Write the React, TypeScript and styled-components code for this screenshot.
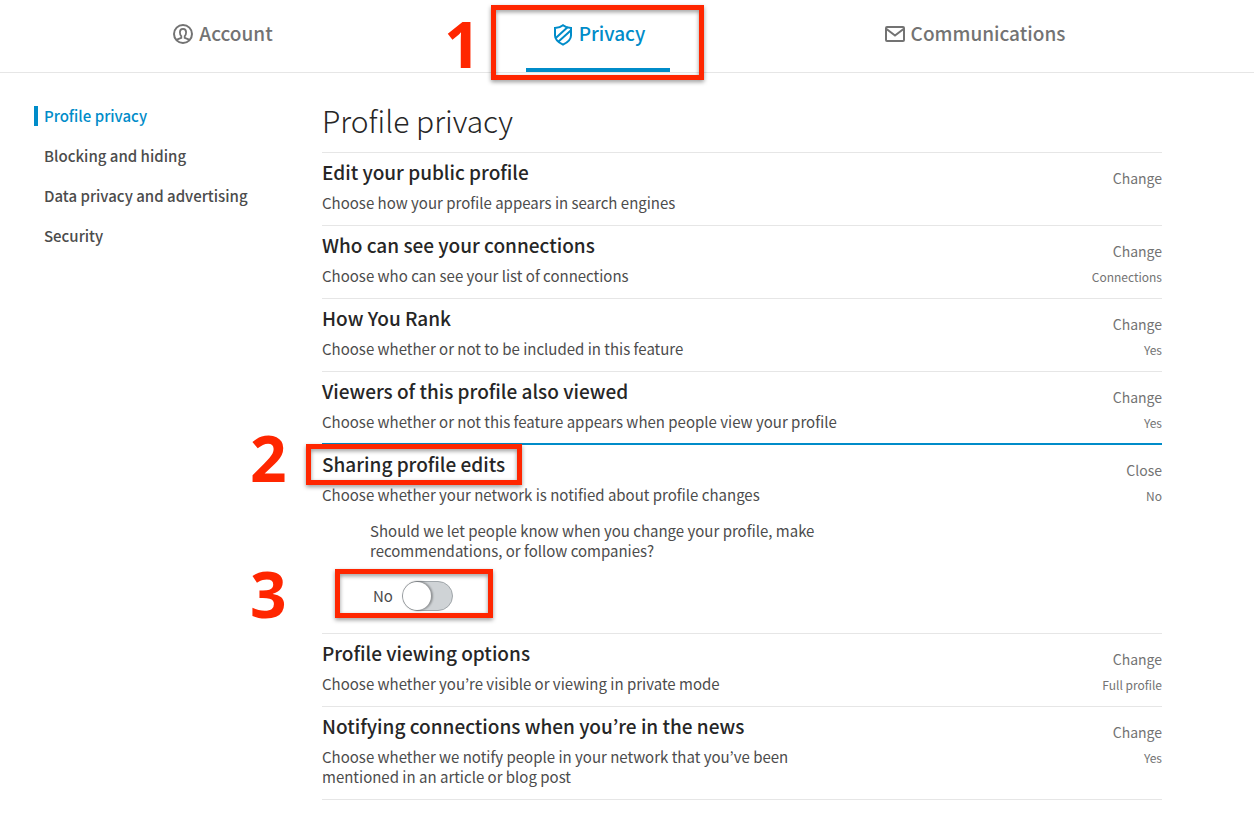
import React, { useState } from "react";
import styled, { createGlobalStyle, css } from "styled-components";

const BLUE = "#008cc9";
const RED = "#ff2600";

const GlobalStyle = createGlobalStyle`
  *, *::before, *::after { box-sizing: border-box; }
  body {
    margin: 0;
    background: #fff;
    color: #4c4c4c;
    font-family: "Source Sans Pro", "Noto Sans CJK KR", "Noto Sans", sans-serif;
    font-size: 15px;
    line-height: 20px;
  }
  button { font: inherit; color: inherit; background: none; border: 0; padding: 0; cursor: pointer; }
  a { color: inherit; text-decoration: none; }
  h1, h2, p, ul { margin: 0; padding: 0; font-weight: inherit; }
  ul { list-style: none; }
`;

const TopBar = styled.header`
  border-bottom: 1px solid #e6e6e6;
  padding: 0 92px 0 34px;
`;

const Tabs = styled.nav`
  display: grid;
  grid-template-columns: repeat(3, 1fr);
  justify-items: center;
`;

const TabSlot = styled.div`
  position: relative;
  display: flex;
`;

const Tab = styled.a<{ $active?: boolean }>`
  display: flex;
  justify-content: center;
  gap: 6px;
  min-width: 144px;
  height: 72px;
  padding: 19px 0 0 2px;
  font-size: 19px;
  line-height: 28px;
  font-weight: 500;
  color: ${(p) => (p.$active ? BLUE : "#737373")};
  border-bottom: 4px solid ${(p) => (p.$active ? BLUE : "transparent")};

  svg {
    flex: none;
    margin-top: 5px;
  }
`;

const Columns = styled.div`
  display: grid;
  grid-template-columns: 288px minmax(0, 1fr);
  padding: 33px 92px 16px 34px;
`;

const SideList = styled.ul`
  display: flex;
  flex-direction: column;
  gap: 20px;
`;

const SideLink = styled.a<{ $active?: boolean }>`
  display: block;
  padding-left: 6px;
  border-left: 4px solid ${(p) => (p.$active ? BLUE : "transparent")};
  color: ${(p) => (p.$active ? BLUE : "#4c4c4c")};
  font-weight: 500;
`;

const PageTitle = styled.h1`
  padding-bottom: 18px;
  font-size: 30px;
  line-height: 28px;
  font-weight: 300;
  color: #262626;
`;

const Settings = styled.div`
  border-bottom: 1px solid #e6e6e6;
`;

const Row = styled.section<{ $open?: boolean }>`
  position: relative;
  display: grid;
  grid-template-columns: minmax(0, 1fr) auto;
  padding: 7px 0 12px;
  border-top: 1px solid #e6e6e6;
  ${(p) =>
    p.$open &&
    css`
      margin-top: -1px;
      padding-bottom: 22px;
      border-top: 2px solid ${BLUE};
    `}
`;

const RowTitle = styled.h2`
  position: relative;
  width: fit-content;
  margin-bottom: 9px;
  font-size: 19px;
  line-height: 24px;
  font-weight: 500;
  color: #262626;
`;

const RowText = styled.p`
  max-width: 530px;
`;

const RowSide = styled.div`
  display: flex;
  flex-direction: column;
  align-items: flex-end;
  gap: 8px;
  padding-top: 8px;
  color: #737373;
`;

const RowAction = styled.button`
  font-size: 14px;
  line-height: 20px;
`;

const RowStatus = styled.span`
  font-size: 12px;
  line-height: 16px;
`;

const Detail = styled.div`
  grid-column: 1 / -1;
  display: flex;
  flex-direction: column;
  align-items: flex-start;
  gap: 20px;
  padding: 16px 0 0 48px;
`;

const Question = styled.p`
  max-width: 480px;
`;

const ToggleField = styled.div`
  position: relative;
  display: flex;
  align-items: center;
  gap: 9px;
  padding-left: 3px;
`;

const Toggle = styled.input`
  appearance: none;
  width: 51px;
  height: 30px;
  margin: 0;
  border: 1px solid #a0a6aa;
  border-radius: 15px;
  background: #cfd3d6;
  cursor: pointer;

  &::before {
    content: "";
    display: block;
    width: 28px;
    height: 28px;
    border-radius: 50%;
    background: #fff;
    box-shadow: 1px 0 2px 1px rgba(0, 0, 0, 0.3);
  }

  &:checked {
    background: ${BLUE};
  }

  &:checked::before {
    margin-left: auto;
  }
`;

const Callout = styled.span<{ $top: number; $right: number; $bottom: number; $left: number }>`
  position: absolute;
  top: ${(p) => -p.$top}px;
  right: ${(p) => -p.$right}px;
  bottom: ${(p) => -p.$bottom}px;
  left: ${(p) => -p.$left}px;
  border: 5px solid ${RED};
  filter: drop-shadow(0 2px 2px rgba(0, 0, 0, 0.4));
  pointer-events: none;
`;

const StepNumber = styled.span<{ $top: number; $left: number }>`
  position: absolute;
  top: ${(p) => p.$top}px;
  left: ${(p) => p.$left}px;
  font-family: "Open Sans", sans-serif;
  font-size: 64px;
  line-height: 64px;
  font-weight: 700;
  color: ${RED};
  pointer-events: none;
`;

const AccountIcon = () => (
  <svg width="20" height="20" viewBox="0 0 20 20" fill="none" stroke="currentColor" strokeWidth="2" aria-hidden="true">
    <circle cx="10" cy="10" r="9" />
    <path d="M3.800 15.600L8.300 13.800V12.200C7.300 11.300 6.900 10 6.900 8.300 6.900 6.200 8 4.900 10 4.900S13.100 6.200 13.100 8.300C13.100 10 12.700 11.300 11.700 12.200V13.800L16.200 15.600" strokeWidth="1.800" />
  </svg>
);

const ShieldIcon = () => (
  <svg width="20" height="22" viewBox="0 0 20 22" fill="none" stroke="currentColor" strokeWidth="2" aria-hidden="true">
    <path d="M10 1.200C8 2.900 5 3.800 2 4v7.500c0 4 3.500 7 8 9.200 4.500-2.200 8-5.200 8-9.200V4c-3-.2-6-1.100-8-2.800z" />
    <path d="M2.500 14.300L14.800 3M5.300 17.800L18 6.200" />
  </svg>
);

const MailIcon = () => (
  <svg width="20" height="20" viewBox="0 0 20 20" fill="none" stroke="currentColor" strokeWidth="2" aria-hidden="true">
    <rect x="1" y="3" width="18" height="14" rx="1" />
    <path d="M1.500 5L10 11.500 18.500 5" />
  </svg>
);

const sideLinks = ["Profile privacy", "Blocking and hiding", "Data privacy and advertising", "Security"];

type Setting = { title: string; text: string; status?: string };

const before: Setting[] = [
  { title: "Edit your public profile", text: "Choose how your profile appears in search engines" },
  { title: "Who can see your connections", text: "Choose who can see your list of connections", status: "Connections" },
  { title: "How You Rank", text: "Choose whether or not to be included in this feature", status: "Yes" },
  {
    title: "Viewers of this profile also viewed",
    text: "Choose whether or not this feature appears when people view your profile",
    status: "Yes",
  },
];

const after: Setting[] = [
  { title: "Profile viewing options", text: "Choose whether you’re visible or viewing in private mode", status: "Full profile" },
  {
    title: "Notifying connections when you’re in the news",
    text: "Choose whether we notify people in your network that you’ve been mentioned in an article or blog post",
    status: "Yes",
  },
];

const SettingRow = ({ title, text, status }: Setting) => (
  <Row>
    <div>
      <RowTitle>{title}</RowTitle>
      <RowText>{text}</RowText>
    </div>
    <RowSide>
      <RowAction type="button">Change</RowAction>
      {status && <RowStatus>{status}</RowStatus>}
    </RowSide>
  </Row>
);

export default function App() {
  const [sharing, setSharing] = useState(false);
  const answer = sharing ? "Yes" : "No";

  return (
    <>
      <GlobalStyle />
      <TopBar>
        <Tabs>
          <TabSlot>
            <Tab href="#account">
              <AccountIcon />
              Account
            </Tab>
          </TabSlot>
          <TabSlot>
            <Tab href="#privacy" $active>
              <ShieldIcon />
              Privacy
            </Tab>
            <Callout $top={-5} $right={34} $bottom={8} $left={35} />
            <StepNumber $top={12} $left={-82}>1</StepNumber>
          </TabSlot>
          <TabSlot>
            <Tab href="#communications">
              <MailIcon />
              Communications
            </Tab>
          </TabSlot>
        </Tabs>
      </TopBar>

      <Columns>
        <nav>
          <SideList>
            {sideLinks.map((label, i) => (
              <li key={label}>
                <SideLink href="#" $active={i === 0}>
                  {label}
                </SideLink>
              </li>
            ))}
          </SideList>
        </nav>

        <main>
          <PageTitle>Profile privacy</PageTitle>
          <Settings>
            {before.map((s) => (
              <SettingRow key={s.title} {...s} />
            ))}
            <Row $open>
              <div>
                <RowTitle>
                  Sharing profile edits
                  <Callout $top={8} $right={17} $bottom={9} $left={16} />
                  <StepNumber $top={-26} $left={-72}>2</StepNumber>
                </RowTitle>
                <RowText>Choose whether your network is notified about profile changes</RowText>
              </div>
              <RowSide>
                <RowAction type="button">Close</RowAction>
                <RowStatus>{answer}</RowStatus>
              </RowSide>
              <Detail>
                <Question>
                  Should we let people know when you change your profile, make recommendations, or follow companies?
                </Question>
                <ToggleField>
                  <label htmlFor="sharing">{answer}</label>
                  <Toggle
                    id="sharing"
                    type="checkbox"
                    checked={sharing}
                    onChange={(e) => setSharing(e.target.checked)}
                  />
                  <Callout $top={12} $right={40} $bottom={7} $left={35} />
                  <StepNumber $top={-19} $left={-120}>3</StepNumber>
                </ToggleField>
              </Detail>
            </Row>
            {after.map((s) => (
              <SettingRow key={s.title} {...s} />
            ))}
          </Settings>
        </main>
      </Columns>
    </>
  );
}
